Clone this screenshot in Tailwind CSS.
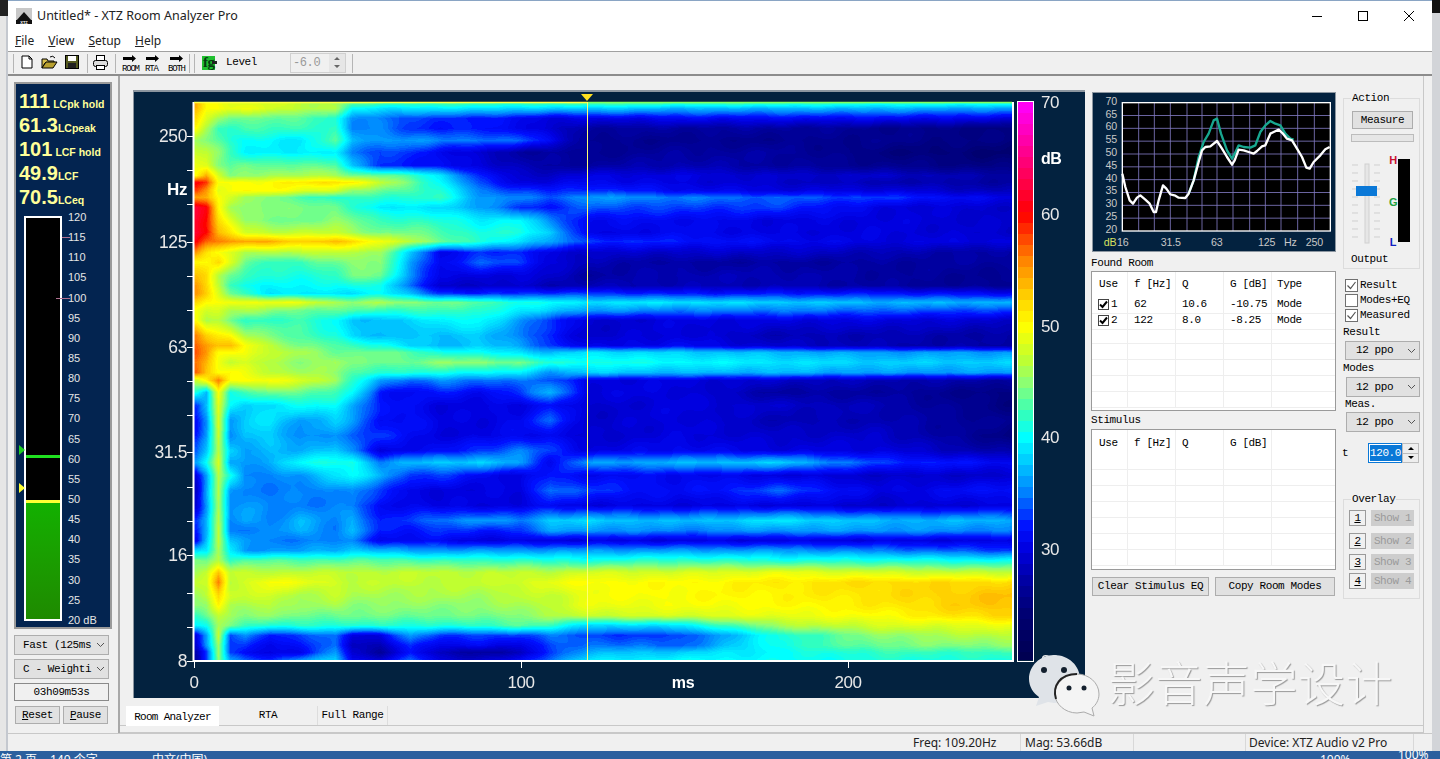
<!DOCTYPE html>
<html lang="en">
<head>
    <meta charset="UTF-8" />
    <title>XTZ Room Analyzer Pro</title>
    <script src="https://cdn.jsdelivr.net/npm/@tailwindcss/browser@4"></script>
</head>
<body class="w-[1440px] h-[759px] overflow-hidden bg-[#d9d9d9] font-['Liberation_Mono',monospace] text-[11px] tracking-[-0.4px] text-black">
    <div class="flex h-[751px]">
        <!-- windows behind -->
        <div class="w-[8px] flex flex-col bg-[#e6e6e6]">
            <div class="h-[16px] bg-[#222]"></div>
            <div class="flex-1 border-r-2 border-[#c4c8cf]"></div>
        </div>

        <div class="w-[1424px] flex flex-col bg-[#f0f0f0] border-t border-[#8aa5c4]">
            <!-- title bar -->
            <div class="h-[30px] bg-white flex items-center pl-[8px] font-['Noto_Sans',sans-serif] text-[12.5px] tracking-normal text-[#222]">
                <svg class="w-[16px] h-[16px]" viewBox="0 0 16 16">
                    <rect width="16" height="16" fill="#c8c8c8" />
                    <path d="M8 4 L16 13 L0 13 Z" fill="#111" />
                    <rect x="0" y="12" width="16" height="4" fill="#111" />
                    <text x="8" y="15.5" font-size="4" fill="#fff" text-anchor="middle" font-family="Liberation Sans" font-weight="bold">XTZ</text>
                </svg>
                <span class="ml-[5px]">Untitled* - XTZ Room Analyzer Pro</span>
                <div class="ml-auto flex items-center">
                    <svg class="w-[46px] h-[30px]" viewBox="0 0 46 30"><path d="M18 15.5 H28" stroke="#000" /></svg>
                    <svg class="w-[46px] h-[30px]" viewBox="0 0 46 30"><rect x="18.5" y="10.5" width="9" height="9" fill="none" stroke="#000" /></svg>
                    <svg class="w-[46px] h-[30px]" viewBox="0 0 46 30"><path d="M18 10 L28 20 M28 10 L18 20" stroke="#000" /></svg>
                </div>
            </div>
            <!-- menu -->
            <div class="h-[21px] bg-white flex items-center pl-[7px] gap-[14px] font-['Noto_Sans',sans-serif] text-[12px] tracking-normal text-[#222] border-b border-[#a0a0a0]">
                <span><u>F</u>ile</span><span><u>V</u>iew</span><span><u>S</u>etup</span><span><u>H</u>elp</span>
            </div>
            <!-- toolbar -->
            <div class="h-[24px] flex items-center border-b-2 border-[#8c8c8c] relative">
                <svg class="w-[350px] h-[24px]" viewBox="8 52 350 24">
                    <path d="M13.5 55 V74 M87.5 55 V74 M115.5 55 V74 M189.5 55 V74 M194.5 55 V74 M352.5 55 V74" stroke="#b5b5b5" />
                    <path d="M22 57 h7 l3 3 v9 h-10 z M29 57 v3 h3" fill="#fff" stroke="#000" />
                    <path d="M42 60 h5 l1 2 h6 v2 h-9 l-3 5 z" fill="#d8c050" stroke="#000" />
                    <path d="M42 69 l4 -6 h11 l-4 6 z" fill="#b8a030" stroke="#000" />
                    <path d="M50 58 q3 -2 5 1" fill="none" stroke="#000" />
                    <rect x="65.5" y="56.5" width="13" height="13" fill="#555a20" stroke="#000" />
                    <rect x="68" y="57" width="8" height="5" fill="#fff" />
                    <rect x="68" y="64" width="8" height="5" fill="#222" />
                    <rect x="96.5" y="56.5" width="8" height="5" fill="#fff" stroke="#000" />
                    <rect x="93.5" y="61.5" width="14" height="6" rx="2" fill="#ddd" stroke="#000" />
                    <rect x="96.5" y="66.5" width="8" height="4" fill="#fff" stroke="#000" />
                    <g fill="#000">
                        <path d="M123 58 h9 v-2 l4 3.5 l-4 3.5 v-2 h-9 z" />
                        <path d="M146 58 h9 v-2 l4 3.5 l-4 3.5 v-2 h-9 z" />
                        <path d="M170 58 h9 v-2 l4 3.5 l-4 3.5 v-2 h-9 z" />
                    </g>
                    <g font-family="Liberation Mono" font-size="9" fill="#000" letter-spacing="-1.2">
                        <text x="122" y="72">ROOM</text><text x="145" y="72">RTA</text><text x="168" y="72">BOTH</text>
                    </g>
                    <rect x="202" y="57" width="13" height="14" fill="#20c030" />
                    <text x="203" y="68" font-family="Liberation Serif" font-weight="bold" font-size="15" fill="#063a10">fg</text>
                    <rect x="212" y="62" width="5" height="3" fill="#222" />
                    <text x="226" y="66" font-family="Liberation Mono" font-size="11" letter-spacing="-0.4" fill="#000">Level</text>
                    <rect x="290.5" y="54.5" width="55" height="19" fill="#f0f0f0" stroke="#d0d0d0" />
                    <text x="293" y="67" font-family="Liberation Mono" font-size="12" fill="#999">-6.0</text>
                    <rect x="329" y="55" width="16" height="18" fill="#e6e6e6" />
                    <path d="M334 61 l3 -3 l3 3 z M334 66 l3 3 l3 -3 z" fill="#666" />
                </svg>
            </div>

            <div class="flex flex-1 min-h-0">
                <!-- left meter column -->
                <div class="w-[112px] border-r-2 border-[#a8a8a8] pl-[6px] pt-[6px]">
                    <div class="w-[98px] h-[547px] bg-[#032450] border-2 border-[#9a9a9a] flex flex-col pl-[3px] font-['Liberation_Sans',sans-serif] tracking-normal">
                        <div class="text-[#ffff99] font-bold pt-[2px]">
                            <div class="h-[24px] flex items-baseline"><span class="text-[20px]">111</span><span class="text-[10.5px] ml-[3px]">LCpk hold</span></div>
                            <div class="h-[24px] flex items-baseline"><span class="text-[20px]">61.3</span><span class="text-[10.5px]">LCpeak</span></div>
                            <div class="h-[24px] flex items-baseline"><span class="text-[20px]">101</span><span class="text-[10.5px] ml-[3px]">LCF hold</span></div>
                            <div class="h-[24px] flex items-baseline"><span class="text-[20px]">49.9</span><span class="text-[10.5px]">LCF</span></div>
                            <div class="h-[24px] flex items-baseline"><span class="text-[20px]">70.5</span><span class="text-[10.5px]">LCeq</span></div>
                        </div>
                        <div class="flex mt-[10px] h-[405px]">
                            <div class="relative w-[38px] ml-[5px] h-[405px] border-2 border-white bg-black">
                                <div class="absolute left-0 right-0 bottom-0 h-[119px] bg-gradient-to-b from-[#12b000] to-[#1e8a00] border-t-[3px] border-[#ffff33]"></div>
                                <div class="absolute left-0 right-0 top-[237px] h-[3px] bg-[#20e020]"></div>
                                <div class="absolute left-[-7px] top-[227px] w-0 h-0 border-y-[5px] border-y-transparent border-l-[6px] border-l-[#20d020]"></div>
                                <div class="absolute left-[-7px] top-[265px] w-0 h-0 border-y-[5px] border-y-transparent border-l-[6px] border-l-[#ffff33]"></div>
                                <div class="absolute left-[36px] top-[19px] w-[8px] h-px bg-[#b07090]"></div>
                                <div class="absolute left-[30px] top-[80px] w-[14px] h-px bg-[#b07090]"></div>
                            </div>
                            <div class="flex flex-col justify-between ml-[6px] text-[11px] leading-[11px] text-[#e6e6e6] h-[414px] -mt-[4px]">
                                <span>120</span><span>115</span><span>110</span><span>105</span><span>100</span><span>95</span><span>90</span><span>85</span><span>80</span><span>75</span><span>70</span><span>65</span><span>60</span><span>55</span><span>50</span><span>45</span><span>40</span><span>35</span><span>30</span><span>25</span><span>20 dB</span>
                            </div>
                        </div>
                    </div>
                    <div class="w-[95px] h-[20px] mt-[6px] bg-[#e1e1e1] border border-[#adadad] flex items-center pl-[8px] pr-[3px] justify-between">
                        <span>Fast (125ms</span>
                        <svg class="w-[9px] h-[6px] shrink-0" viewBox="0 0 9 6"><path d="M1 1 L4.5 4.5 L8 1" fill="none" stroke="#555" /></svg>
                    </div>
                    <div class="w-[95px] h-[20px] mt-[4px] bg-[#e1e1e1] border border-[#adadad] flex items-center pl-[8px] pr-[3px] justify-between">
                        <span>C - Weighti</span>
                        <svg class="w-[9px] h-[6px] shrink-0" viewBox="0 0 9 6"><path d="M1 1 L4.5 4.5 L8 1" fill="none" stroke="#555" /></svg>
                    </div>
                    <div class="w-[95px] h-[18px] mt-[4px] bg-[#f0f0f0] border border-[#8a8a8a] flex items-center justify-center">03h09m53s</div>
                    <div class="flex gap-[3px] mt-[5px] ml-[1px]">
                        <div class="w-[45px] h-[18px] bg-[#e1e1e1] border border-[#adadad] flex items-center justify-center"><span><u>R</u>eset</span></div>
                        <div class="w-[45px] h-[18px] bg-[#e1e1e1] border border-[#adadad] flex items-center justify-center"><span><u>P</u>ause</span></div>
                    </div>
                </div>

                <!-- main tab area -->
                <div class="w-[1303px] flex flex-col border-b border-[#c8c8c8]">
                    <div class="flex pl-[13px] pt-[14px] h-[630px]">
                        <!-- waterfall plot -->
                        <div class="relative w-[952px] h-[608px] bg-[#03223f] border-t-2 border-l border-[#8c96a0]">
                            <canvas id="heat" width="819" height="558" class="absolute left-[60px] top-[10px]"></canvas>
                            <canvas id="bar" width="15" height="558" class="absolute left-[884px] top-[10px]"></canvas>
                            <svg class="absolute left-[-1px] top-[-2px]" width="952" height="608" viewBox="133 90 952 608" font-family="Liberation Sans" fill="#e8e8e8">
                                <path d="M193.5 102 V661 H1013 V102" fill="none" stroke="#fff" stroke-width="2" />
                                <path d="M194 102.5 H587" stroke="#ffff40" stroke-width="1.5" />
                                <path d="M587 102.5 H1012" stroke="#80ff60" stroke-width="1.5" />
                                <rect x="1017.5" y="101.5" width="16" height="560" fill="none" stroke="#fff" />
                                <path d="M187 136.5 h6 M187 170.5 h6 M187 204.5 h6 M187 242.5 h6 M187 276.5 h6 M187 310.5 h6 M187 347.5 h6 M187 381.5 h6 M187 415.5 h6 M187 452.5 h6 M187 487.5 h6 M187 521.5 h6 M187 555.5 h6 M187 593.5 h6 M187 627.5 h6 M187 661.5 h6" stroke="#fff" />
                                <path d="M194.5 661 v7 M521.5 661 v7 M848.5 661 v7" stroke="#fff" />
                                <path d="M587.5 102 V660" stroke="#ffff70" />
                                <path d="M581 94 h12 l-6 7 z" fill="#ffe020" />
                                <g font-size="17.5" text-anchor="end">
                                    <text x="187" y="142">250</text>
                                    <text x="187" y="248">125</text>
                                    <text x="187" y="353">63</text>
                                    <text x="187" y="458">31.5</text>
                                    <text x="187" y="561">16</text>
                                    <text x="187" y="667">8</text>
                                </g>
                                <text x="187" y="195" font-size="17" font-weight="bold" fill="#fff" text-anchor="end">Hz</text>
                                <g font-size="17" text-anchor="middle">
                                    <text x="194" y="688">0</text>
                                    <text x="521" y="688">100</text>
                                    <text x="848" y="688">200</text>
                                </g>
                                <text x="683" y="688" font-size="16" font-weight="bold" fill="#fff" text-anchor="middle">ms</text>
                                <g font-size="17">
                                    <text x="1041" y="108">70</text>
                                    <text x="1041" y="220">60</text>
                                    <text x="1041" y="332">50</text>
                                    <text x="1041" y="443">40</text>
                                    <text x="1041" y="555">30</text>
                                    <text x="1041" y="667">20</text>
                                </g>
                                <text x="1041" y="164" font-size="16" font-weight="bold" fill="#fff">dB</text>
                            </svg>
                        </div>

                        <!-- found room / stimulus column -->
                        <div class="w-[245px] ml-[6px] pt-[2px]">
                            <div class="w-[244px] h-[160px] ml-[1px] border border-[#8c96a0] bg-[#03223f]">
                                <svg width="242" height="158" viewBox="8 8 726 474" font-family="Liberation Sans">
                                    <rect x="96" y="37" width="624" height="385" fill="#000" />
                                    <path d="M145 37 V422 M192 37 V422 M240 37 V422 M290 37 V422 M335 37 V422 M380 37 V422 M428 37 V422 M478 37 V422 M525 37 V422 M572 37 V422 M622 37 V422 M672 37 V422 M96 75.5 H720 M96 114 H720 M96 152.5 H720 M96 191 H720 M96 229.5 H720 M96 268 H720 M96 306.5 H720 M96 345 H720 M96 383.5 H720" stroke="#8078c0" stroke-width="2.5" fill="none" />
                                    <rect x="96" y="37" width="624" height="385" fill="none" stroke="#fff" stroke-width="4" />
                                    <polyline fill="none" stroke="#18a890" stroke-width="7" stroke-linejoin="round" points="295,310 310,270 325,200 340,155 355,130 370,90 380,85 392,130 410,180 425,205 433,190 445,165 460,170 480,172 495,165 510,125 525,105 540,92 555,100 570,105 585,130 600,145 610,148" />
                                    <polyline fill="none" stroke="#fff" stroke-width="7" stroke-linejoin="round" points="96,250 105,290 118,330 128,340 140,322 150,315 165,328 178,340 190,365 197,365 205,330 218,285 228,295 240,312 255,316 265,322 285,323 295,310 310,270 325,215 335,180 345,170 360,168 380,152 395,175 410,200 425,223 433,210 445,178 460,180 475,185 490,190 500,182 515,168 525,165 540,130 550,125 565,118 578,130 590,145 605,150 620,175 635,200 648,232 658,235 670,215 690,195 705,177 718,170" />
                                    <g font-size="32" fill="#c8c8c8" text-anchor="end">
                                        <text x="80" y="44">70</text><text x="80" y="82">65</text><text x="80" y="120">60</text><text x="80" y="159">55</text><text x="80" y="198">50</text><text x="80" y="236">45</text><text x="80" y="274">40</text><text x="80" y="312">35</text><text x="80" y="351">30</text><text x="80" y="389">25</text><text x="80" y="427">20</text>
                                    </g>
                                    <g font-size="32" fill="#c8c8c8">
                                        <text x="80" y="468">16</text><text x="211" y="468">31.5</text><text x="362" y="468">63</text><text x="503" y="468">125</text><text x="581" y="468">Hz</text><text x="646" y="468">250</text>
                                    </g>
                                    <text x="40" y="468" font-size="32" fill="#d8e060">dB</text>
                                </svg>
                            </div>
                            <div class="h-[19px] pt-[4px] leading-[14px]">Found Room</div>
                            <div class="h-[140px] bg-white border border-[#9a9a9a] overflow-hidden">
                                <div class="grid grid-cols-[36px_48px_48px_48px_1fr] h-[24px] items-center">
                                    <span class="pl-[7px] h-full flex items-center border-r border-[#eee]">Use</span><span class="pl-[6px] h-full flex items-center border-r border-[#eee]">f [Hz]</span><span class="pl-[6px] h-full flex items-center border-r border-[#eee]">Q</span><span class="pl-[6px] h-full flex items-center border-r border-[#eee]">G [dB]</span><span class="pl-[5px]">Type</span>
                                </div>
                                <div class="grid grid-cols-[36px_48px_48px_48px_1fr] h-[16px] items-center">
                                    <span class="pl-[6px] h-full flex items-center gap-[2px] border-r border-b border-[#eee]"><span class="w-[11px] h-[11px] border border-[#444] bg-white flex items-center justify-center"><svg width="9" height="9" viewBox="0 0 9 9"><path d="M1 4.5 L3.5 7 L8 1.5" fill="none" stroke="#000" stroke-width="2" /></svg></span>1</span>
                                    <span class="pl-[6px] h-full flex items-center border-r border-b border-[#eee]">62</span><span class="pl-[6px] h-full flex items-center border-r border-b border-[#eee]">10.6</span><span class="pl-[6px] h-full flex items-center border-r border-b border-[#eee]">-10.75</span><span class="pl-[5px] h-full flex items-center border-b border-[#eee]">Mode</span>
                                </div>
                                <div class="grid grid-cols-[36px_48px_48px_48px_1fr] h-[16px] items-center">
                                    <span class="pl-[6px] h-full flex items-center gap-[2px] border-r border-b border-[#eee]"><span class="w-[11px] h-[11px] border border-[#444] bg-white flex items-center justify-center"><svg width="9" height="9" viewBox="0 0 9 9"><path d="M1 4.5 L3.5 7 L8 1.5" fill="none" stroke="#000" stroke-width="2" /></svg></span>2</span>
                                    <span class="pl-[6px] h-full flex items-center border-r border-b border-[#eee]">122</span><span class="pl-[6px] h-full flex items-center border-r border-b border-[#eee]">8.0</span><span class="pl-[6px] h-full flex items-center border-r border-b border-[#eee]">-8.25</span><span class="pl-[5px] h-full flex items-center border-b border-[#eee]">Mode</span>
                                </div>
                                <div class="empty-rows" data-rows="5"></div>
                            </div>
                            <div class="h-[18px] pt-[2px] leading-[14px]">Stimulus</div>
                            <div class="h-[141px] bg-white border border-[#9a9a9a] overflow-hidden">
                                <div class="grid grid-cols-[36px_48px_48px_48px_1fr] h-[24px] items-center">
                                    <span class="pl-[7px] pt-[2px] h-full flex items-center border-r border-[#eee]">Use</span><span class="pl-[6px] pt-[2px] h-full flex items-center border-r border-[#eee]">f [Hz]</span><span class="pl-[6px] pt-[2px] h-full flex items-center border-r border-[#eee]">Q</span><span class="pl-[6px] pt-[2px] h-full flex items-center border-r border-[#eee]">G [dB]</span><span></span>
                                </div>
                                <div class="empty-rows" data-rows="7"></div>
                            </div>
                            <div class="flex gap-[6px] mt-[7px] ml-[1px]">
                                <div class="w-[117px] h-[19px] bg-[#e1e1e1] border border-[#adadad] flex items-center justify-center">Clear Stimulus EQ</div>
                                <div class="w-[120px] h-[19px] bg-[#e1e1e1] border border-[#adadad] flex items-center justify-center">Copy Room Modes</div>
                            </div>
                        </div>

                        <!-- controls column -->
                        <div class="w-[77px] ml-[7px] pt-[8px]">
                            <div class="relative h-[171px] border border-[#dcdcdc]">
                                <span class="absolute left-[7px] top-[-8px] bg-[#f0f0f0] px-px leading-[14px]">Action</span>
                                <div class="ml-[8px] mt-[12px] w-[61px] h-[18px] bg-[#e1e1e1] border border-[#adadad] flex items-center justify-center">Measure</div>
                                <div class="ml-[7px] mt-[5px] w-[63px] h-[8px] bg-[#e6e6e6] border border-[#bcbcbc]"></div>
                                <svg class="block mt-[10px]" width="75" height="95" viewBox="1344 152 75 95">
                                    <path d="M1352 165 h6 M1352 173 h6 M1352 181 h6 M1352 189 h6 M1352 197 h6 M1352 205 h6 M1352 213 h6 M1352 221 h6 M1352 229 h6 M1352 237 h6 M1374 165 h6 M1374 173 h6 M1374 181 h6 M1374 189 h6 M1374 197 h6 M1374 205 h6 M1374 213 h6 M1374 221 h6 M1374 229 h6 M1374 237 h6" stroke="#cfcfcf" />
                                    <rect x="1365" y="164" width="4" height="79" fill="#e6e6e6" stroke="#d0d0d0" />
                                    <rect x="1356" y="186" width="21" height="10" fill="#0a78d7" />
                                    <rect x="1398" y="159" width="12" height="83" fill="#000" />
                                    <g font-family="Liberation Sans" font-weight="bold" font-size="11" text-anchor="middle">
                                        <text x="1393" y="164" fill="#c81030">H</text>
                                        <text x="1393" y="206" fill="#20a040">G</text>
                                        <text x="1393" y="246" fill="#1020c0">L</text>
                                    </g>
                                </svg>
                                <div class="ml-[7px] mt-[5px] leading-[14px]">Output</div>
                            </div>
                            <div class="mt-[9px] flex flex-col gap-[1px] ml-[2px]">
                                <div class="flex items-center h-[14px] gap-[2px]"><span class="w-[13px] h-[13px] border border-[#707070] bg-white flex items-center justify-center"><svg width="11" height="11" viewBox="0 0 11 11"><path d="M1.5 5.5 L4.5 8.5 L9.5 2" fill="none" stroke="#555" stroke-width="1.2" /></svg></span>Result</div>
                                <div class="flex items-center h-[14px] gap-[2px]"><span class="w-[13px] h-[13px] border border-[#707070] bg-white"></span>Modes+EQ</div>
                                <div class="flex items-center h-[14px] gap-[2px]"><span class="w-[13px] h-[13px] border border-[#707070] bg-white flex items-center justify-center"><svg width="11" height="11" viewBox="0 0 11 11"><path d="M1.5 5.5 L4.5 8.5 L9.5 2" fill="none" stroke="#555" stroke-width="1.2" /></svg></span>Measured</div>
                            </div>
                            <div class="leading-[14px] mt-[3px]">Result</div>
                            <div class="ml-[2px] w-[75px] h-[19px] mt-[2px] bg-[#e1e1e1] border border-[#adadad] flex items-center pl-[10px] pr-[3px] justify-between"><span>12 ppo</span><svg class="w-[9px] h-[6px]" viewBox="0 0 9 6"><path d="M1 1 L4.5 4.5 L8 1" fill="none" stroke="#555" /></svg></div>
                            <div class="leading-[14px] mt-[1px]">Modes</div>
                            <div class="ml-[3px] w-[74px] h-[20px] mt-[2px] bg-[#e1e1e1] border border-[#adadad] flex items-center pl-[9px] pr-[3px] justify-between"><span>12 ppo</span><svg class="w-[9px] h-[6px]" viewBox="0 0 9 6"><path d="M1 1 L4.5 4.5 L8 1" fill="none" stroke="#555" /></svg></div>
                            <div class="leading-[14px] ml-[2px]">Meas.</div>
                            <div class="ml-[3px] w-[74px] h-[20px] mt-[1px] bg-[#e1e1e1] border border-[#adadad] flex items-center pl-[9px] pr-[3px] justify-between"><span>12 ppo</span><svg class="w-[9px] h-[6px]" viewBox="0 0 9 6"><path d="M1 1 L4.5 4.5 L8 1" fill="none" stroke="#555" /></svg></div>
                            <div class="flex items-center mt-[11px] h-[20px]">
                                <span class="w-[26px] -ml-[1px]">t</span>
                                <div class="w-[34px] h-[20px] border border-[#0a78d7] bg-white flex items-center pl-px"><span class="bg-[#0a78d7] text-white h-[16px] leading-[16px]">120.0</span></div>
                                <div class="w-[17px] h-[20px] flex flex-col border border-[#bcbcbc] bg-white">
                                    <div class="flex-1 flex items-center justify-center bg-[#eee] border-b border-[#bcbcbc]"><span class="w-0 h-0 border-x-[3px] border-x-transparent border-b-[3px] border-b-black"></span></div>
                                    <div class="flex-1 flex items-center justify-center bg-[#eee]"><span class="w-0 h-0 border-x-[3px] border-x-transparent border-t-[3px] border-t-black"></span></div>
                                </div>
                            </div>
                            <div class="relative h-[100px] mt-[36px] border border-[#dcdcdc] pl-[5px] pt-[10px]">
                                <span class="absolute left-[7px] top-[-8px] bg-[#f0f0f0] px-px leading-[14px]">Overlay</span>
                                <div class="flex gap-[5px] h-[16px]"><div class="w-[17px] border border-[#9a9a9a] flex items-center justify-center"><u>1</u></div><div class="w-[43px] bg-[#cdcdcd] text-[#9a9a9a] flex items-center justify-center">Show 1</div></div>
                                <div class="flex gap-[5px] h-[16px] mt-[7px]"><div class="w-[17px] border border-[#9a9a9a] flex items-center justify-center"><u>2</u></div><div class="w-[43px] bg-[#cdcdcd] text-[#9a9a9a] flex items-center justify-center">Show 2</div></div>
                                <div class="flex gap-[5px] h-[16px] mt-[5px]"><div class="w-[17px] border border-[#9a9a9a] flex items-center justify-center"><u>3</u></div><div class="w-[43px] bg-[#cdcdcd] text-[#9a9a9a] flex items-center justify-center">Show 3</div></div>
                                <div class="flex gap-[5px] h-[16px] mt-[3px]"><div class="w-[17px] border border-[#9a9a9a] flex items-center justify-center"><u>4</u></div><div class="w-[43px] bg-[#cdcdcd] text-[#9a9a9a] flex items-center justify-center">Show 4</div></div>
                            </div>
                        </div>
                    </div>
                    <!-- tabs -->
                    <div class="flex pl-[6px] h-[20px] border-b border-[#c8c8c8]">
                        <div class="w-[93px] h-[20px] pt-[2px] bg-white flex items-center justify-center tracking-[-0.7px]">Room Analyzer</div>
                        <div class="w-[99px] pt-[3px] leading-[13px] text-center border-r border-[#ddd]">RTA</div>
                        <div class="w-[70px] pt-[3px] leading-[13px] text-center border-r border-[#ddd]">Full Range</div>
                    </div>
                </div>
                <div class="w-[9px] border-l border-[#c8c8c8]"></div>
            </div>

            <!-- status bar -->
            <div class="h-[18px] border-t border-[#c8c8c8] flex items-center font-['Noto_Sans',sans-serif] text-[12px] tracking-normal text-[#222] relative">
                <span class="absolute left-[905px]">Freq: 109.20Hz</span>
                <span class="absolute left-[1012px] h-[18px] border-l border-[#d8d8d8]"></span>
                <span class="absolute left-[1017px]">Mag: 53.66dB</span>
                <span class="absolute left-[1125px] h-[18px] border-l border-[#d8d8d8]"></span>
                <span class="absolute left-[1237px] h-[18px] border-l border-[#d8d8d8]"></span>
                <span class="absolute left-[1241px]">Device: XTZ Audio v2 Pro</span>
                <span class="absolute left-[1405px] h-[18px] border-l border-[#d8d8d8]"></span>
            </div>
        </div>

        <div class="w-[8px] flex flex-col bg-[#d2d4d8]">
            <div class="h-[13px] bg-[#111]"></div>
        </div>
    </div>

    <!-- taskbar strip, cut off by the window edge -->
    <div class="relative h-[8px] bg-[#2b5f9e] overflow-hidden font-['Noto_Sans','Noto_Sans_CJK_SC',sans-serif] text-[12px] tracking-normal text-white leading-[14px]">
        <span class="absolute left-0 top-[2px]">第 2 页</span>
        <span class="absolute left-[50px] top-[2px]">140 个字</span>
        <span class="absolute left-[152px] top-[2px]">中文(中国)</span>
        <span class="absolute left-[1320px] top-[2px]">100%</span>
        <span class="absolute left-[1398px] top-[-3px]">100%</span>
    </div>

    <!-- wechat watermark over the picture -->
    <div class="absolute left-[1028px] top-[654px] flex items-start">
        <svg width="74" height="66" viewBox="1028 654 74 66">
            <path d="M1054 655 C1069 655 1080 666 1080 679 C1080 692 1069 703 1054 703 L1048 702 L1036 706 L1039 697 C1033 693 1029 686 1029 679 C1029 666 1040 655 1054 655 Z" fill="#dfe3e8" />
            <circle cx="1044" cy="670" r="3" fill="#14202e" />
            <circle cx="1064" cy="670" r="3" fill="#14202e" />
            <path d="M1077 674 C1089 674 1099 683 1099 694 C1099 700 1096 705 1092 708 L1094 716 L1084 712 L1077 713 C1065 713 1055 704 1055 694 C1055 683 1065 674 1077 674 Z" fill="#f4f4f4" stroke="#aaa" stroke-width="1" />
            <path d="M1056 699 C1052 686 1060 674 1077 674" fill="none" stroke="#222" stroke-width="2" />
            <circle cx="1069" cy="688" r="2.5" fill="#14202e" />
            <circle cx="1084" cy="688" r="2.5" fill="#14202e" />
        </svg>
        <span class="ml-[6px] mt-[-6px] font-['Noto_Sans_CJK_SC',sans-serif] font-light text-[47px] leading-[66px] tracking-[0.5px] text-[#f7f7f7] [text-shadow:1px_1px_1px_#9a9a9a]">影音声学设计</span>
    </div>

    <script>
        // blank grid rows for the two list views
        document.querySelectorAll('.empty-rows').forEach(el => {
            let html = '';
            for (let i = 0; i < +el.dataset.rows; i++) {
                html += '<div class="grid grid-cols-[36px_48px_48px_48px_1fr] h-[16px]"><span class="border-r border-b border-[#eee]"></span><span class="border-r border-b border-[#eee]"></span><span class="border-r border-b border-[#eee]"></span><span class="border-r border-b border-[#eee]"></span><span class="border-b border-[#eee]"></span></div>';
            }
            el.innerHTML = html;
        });

        // dB colour scale read off the bar next to the plot
        const stops = [[20,0,0,80],[24,0,0,112],[27,0,0,160],[30,0,0,224],[32,0,16,255],[35,0,128,255],[38,0,208,255],[40,0,255,255],[42,48,255,192],[45,144,255,112],[47,192,255,48],[50,255,255,0],[53,255,200,0],[56,255,128,0],[60,255,0,0],[65,255,0,128],[70,255,0,255]];
        function colour(db) {
            if (db <= 20) return stops[0].slice(1);
            for (let i = 1; i < stops.length; i++) {
                if (db <= stops[i][0]) {
                    const a = stops[i - 1], b = stops[i], t = (db - a[0]) / (b[0] - a[0]);
                    return [a[1] + (b[1] - a[1]) * t, a[2] + (b[2] - a[2]) * t, a[3] + (b[3] - a[3]) * t];
                }
            }
            return stops[stops.length - 1].slice(1);
        }

        // level table: first number of a row is its y, the rest follow the x columns
        const xs = [196,206,218,230,245,270,300,335,352,380,410,440,480,520,550,590,680,780,880,1012];
        const rows = [
            [102,54,50,50,49,48,48,47,46,44,43,43,43,43,43,43,44,43,43,42,42],
            [108,54,50,50,49,49,48,47,46,40,39,39,39,39,38,38,38,37,37,37,36],
            [118,52,48,45,44,44,44,43,41,36,35,33,33,32,31,30,30,31,31,31,30],
            [128,50,46,42,42,43,42,42,42,35,35,33,32,32,31,29,27,27,27,26,25],
            [140,46,45,43,41,40,40,39,43,37,36,36,35,35,34,31,26,26,26,26,25],
            [152,47,47,45,42,40,39.5,39,40,35,33,33,31,29,27,27,26,27,27,25,24],
            [165,49,49,45,43,44,43,44,43,37,33,32,31,30,28,27,27,28,27,26,25],
            [175,50,54,48,44,45,46,46,46,44,44,42,39,32,29,29,30,30,29,29,27],
            [182,60,58,50,50,50,50,51,52,51,47,44,40,33,30,30,31,30,29,28,27],
            [190,58,55,49,50,50,50,49,48,45,44,43,41,35,33,32,33,31,30,30,28],
            [197,55,54,50,48,45,45,43,41,42,42,41,42,36,35,34,36,35,34,33,30],
            [207,62,60,50,46,45,45,44,44,42,39,39,39,36,33,32,34,33,33,30,29],
            [220,62,60,52,49,45,44,44,45,44,42,42,41,39.5,40,35,31,31,30,30,29],
            [232,62,60,53,51,48,47,47,47,46,44,44,43,41,41,38,30,31,30,30,29],
            [241,60,57,56,55,55,54,52,54,52,49,47,44,41,39,36,33,32,31,30,30],
            [252,55,52,50,48,46,46,47,47,46,46,38,30,33,32,30,29,29,29,28,27],
            [262,50,50,52,48,44,42,42,44,45,45,36,31,34,33,30,28,27,27,27,27],
            [275,53,52,47,44,42,41,41,42,44,44,36,30,30,30,29,27,28,28,27,26],
            [285,55,52,47,42,40,40,40,40,41,41,34,29,29,29,28,28,28,28,27,26],
            [293,55,52,48,44,42,39,39,39,39,40,37,33,32,33,33,33,32,32,32,31],
            [302,52,50,50,50,49,49,49,46,45,46,45,44,43,41,40,39,39,38,37,37],
            [310,50,48,48,46,46,45,44,43,43,42,42,42,42,39,38,36,35,35,34,33],
            [320,50,46,46,44,42,42,42,40,38,37,38,40,40,36,33,29,30,30,30,29],
            [335,56,53,51,50,46,44,43,41,38,37,38,37,38,35,32,29,30,28,28,27],
            [345,57,55,53,53,50,47,44,43,42,41,38,37,38,36,33,30,31,29,28,27],
            [352,57,55,50,50,50,47,46,44,44,44,43,41,40,39,37,39,38,37,36,36],
            [362,56,54,50,47,48,46,45,46,44,44,44,45,45,44,41,41,40,39,38,38],
            [372,57,53,50,50,49,47,46,45,43,42,41,41,40,39,36,38,37,37,36,36],
            [380,47,50,56,50,50,50,48,46,42,36,34,36,34,35,34,30,30,29,28,27],
            [392,41,37,50,41,42,44,44,42,40,32,31,32,31,33,37,30,30,27,27,25],
            [405,33,37,48,40,38,39,40,40,37,32,31,30,30,30,32,29,30,29,28,25],
            [420,32,36,48,36,38,39,36,38,36,31,32,30,30,31,34,29,30,28,28,26],
            [435,32,36,47,35,38,38,35,36,34,33,31,30,30,31,31,29,30,29,29,25],
            [450,34,38,47,38,36,37,37,38,35,30,31,31,33,35,33,30,31,30,30,27],
            [462,36,40,48,36,36,37,40,41,41,35,37,38,38,36,31,36,37,38,33,31],
            [475,30,36,47,41,35,35,36,39,40,37,33,33,31,30,32,31,31,30,29,29],
            [490,29,36,46,36,35,35,35,35,36,33,30,30,30,30,35,33,31,34,30,32],
            [505,30,36,46,36,36,35,35,35,35,31,31,30,30,30,31,30,30,30,29,30],
            [520,33,37,46,35,37,35,37,35,37,32,33,35,36,35,38,38,37,39,37,37],
            [530,32,37,47,35,35,35,37,35,37,32,32,33,32,33,36,36,35,36,36,35],
            [540,31,38,47,37,36,35,35,35,35,31,31,31,30,30,30,30,30,30,30,30],
            [550,38,39,46,39,36,36,36,37,38,37,36,36,36,36,36,36,36,36,35,33],
            [560,44,44,47,42,43,43,43,43,43,43,43,42,42,42,41,41,42,41,41,40],
            [572,46,47,53,47,47,47,47,47,47,47,47,47,47,47,47,48,48,49,48,47],
            [582,47,47,56,47,48,50,49,48,47,47,47,47,47,48,49,50,50,51,52,52],
            [595,46,47,52,48,47,48,46,47,46,46,46,46,46,47,47,49.5,50,50.5,51.5,53.5],
            [605,45,45,50,46,46,47,45,46,45,45,45,45,45,46,47,49,49.5,50,51,53.5],
            [615,42,44,47,46,45,45,44,44,44,44,44,44,44,45,46,47.5,48,49,50,52.5],
            [625,40,41,46,44,42,41,42,41,41,42,41,41,42,43,42,38,39,46,48,49],
            [635,30,36,47,33,36,32,33,35,30,30,36,33,33,33,35,33,33,41,45,47],
            [645,29,36,46,33,33,30,32,35,28,28,33,30,31,30,33,35,34,41,44,45],
            [652,28,33,46,33,31,30,31,36,29,27,32,28,27,28,33,37,38,40,42,42],
            [660,27,33,45,36,34,33,36,38,31,30,34,30,29,31,35,39,40,40,41,41]
        ];

        function level(x, y) {
            let r = 0;
            while (r < rows.length - 2 && rows[r + 1][0] <= y) r++;
            let c = 0;
            while (c < xs.length - 2 && xs[c + 1] <= x) c++;
            const ty = Math.min(1, Math.max(0, (y - rows[r][0]) / (rows[r + 1][0] - rows[r][0])));
            const tx = Math.min(1, Math.max(0, (x - xs[c]) / (xs[c + 1] - xs[c])));
            const top = rows[r][c + 1] + (rows[r][c + 2] - rows[r][c + 1]) * tx;
            const bot = rows[r + 1][c + 1] + (rows[r + 1][c + 2] - rows[r + 1][c + 1]) * tx;
            return top + (bot - top) * ty;
        }

        const heat = document.getElementById('heat').getContext('2d');
        const img = heat.createImageData(819, 558);
        for (let py = 0; py < 558; py++) {
            for (let px = 0; px < 819; px++) {
                const x = px + 194, y = py + 102;
                const wobble = 0.5 * Math.sin(x / 9 + y / 13) * Math.sin(y / 7 - x / 23);
                const db = Math.round((level(x, y) + wobble) * 2) / 2;
                const c = colour(db), i = (py * 819 + px) * 4;
                img.data[i] = c[0]; img.data[i + 1] = c[1]; img.data[i + 2] = c[2]; img.data[i + 3] = 255;
            }
        }
        heat.putImageData(img, 0, 0);

        const bar = document.getElementById('bar').getContext('2d');
        for (let py = 0; py < 558; py += 11) {
            const c = colour(70 - (py + 5) / 558 * 50);
            bar.fillStyle = 'rgb(' + c[0] + ',' + c[1] + ',' + c[2] + ')';
            bar.fillRect(0, py, 15, 11);
        }
    </script>
</body>
</html>
